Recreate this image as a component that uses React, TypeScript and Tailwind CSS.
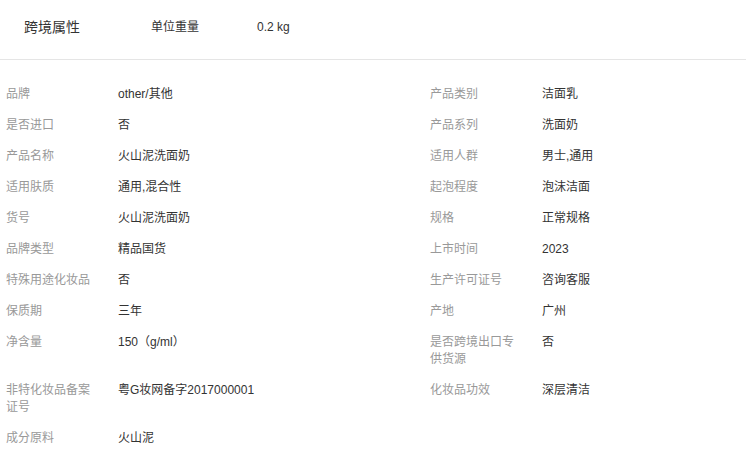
import React from 'react';

// Attribute pairs, left and right column per row
const rows: [string, string, string?, string?][] = [
  ['品牌', 'other/其他', '产品类别', '洁面乳'],
  ['是否进口', '否', '产品系列', '洗面奶'],
  ['产品名称', '火山泥洗面奶', '适用人群', '男士,通用'],
  ['适用肤质', '通用,混合性', '起泡程度', '泡沫洁面'],
  ['货号', '火山泥洗面奶', '规格', '正常规格'],
  ['品牌类型', '精品国货', '上市时间', '2023'],
  ['特殊用途化妆品', '否', '生产许可证号', '咨询客服'],
  ['保质期', '三年', '产地', '广州'],
  ['净含量', '150（g/ml）', '是否跨境出口专供货源', '否'],
  ['非特化妆品备案证号', '粤G妆网备字2017000001', '化妆品功效', '深层清洁'],
  ['成分原料', '火山泥'],
];

function Item({ label, value }: { label?: string; value?: string }) {
  if (!label) return <div />;
  return (
    <div className="flex items-start text-[12px] leading-[17px] mb-[14px]">
      <div className="w-[92px] mr-[20px] text-[#999]">{label}</div>
      <div className="text-[#333]">{value}</div>
    </div>
  );
}

export default function App() {
  return (
    <div
      className="w-[746px] h-[449px] bg-white overflow-hidden"
      style={{ fontFamily: '"Liberation Sans", Arial, "Noto Sans CJK SC", sans-serif' }}
    >
      {/* Header */}
      <div className="h-[60px] pt-[19px] border-b border-[#e5e5e5] flex items-start">
        <div className="ml-[24px] w-[127px] text-[14px] leading-4 text-[#333]">跨境属性</div>
        <div className="w-[106px] text-[12px] leading-4 text-[#333]">单位重量</div>
        <div className="text-[12px] leading-4 text-[#333]">0.2 kg</div>
      </div>

      {/* Attribute grid */}
      <div className="grid grid-cols-[424px_1fr] pl-[6px] pt-[26px]">
        {rows.map(([l1, v1, l2, v2], i) => (
          <React.Fragment key={i}>
            <Item label={l1} value={v1} />
            <Item label={l2} value={v2} />
          </React.Fragment>
        ))}
      </div>
    </div>
  );
}
